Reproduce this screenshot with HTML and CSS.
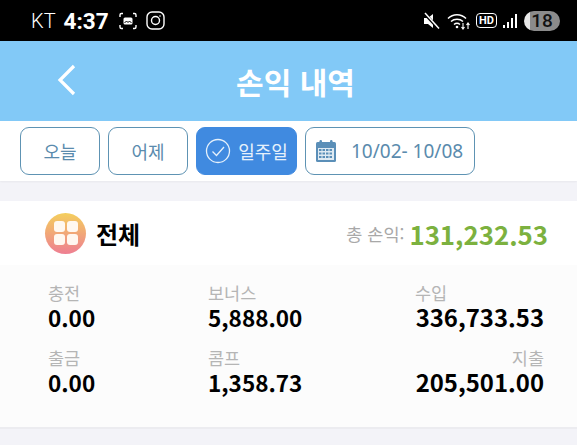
FILE: index.html
```html
<!DOCTYPE html>
<html lang="ko">
<head>
<meta charset="utf-8">
<title>손익 내역</title>
<link rel="stylesheet" href="styles.css">
</head>
<body>
<div class="status">
  <div class="status-left">
    <span class="carrier">KT</span>
    <span class="clock">4:37</span>
    <svg class="st-ic" width="20" height="20" viewBox="0 0 20 20" fill="none" stroke="#fff" stroke-width="1.4"><path d="M5 2.5H3.5a1.5 1.5 0 0 0-1.5 1.5V6M15 2.5h1.5A1.5 1.5 0 0 1 18 4v2M5 17.500H3.500A1.500 1.500 0 0 1 2 16v-2M15 17.500h1.500A1.500 1.500 0 0 0 18 16v-2"/><rect x="5.500" y="6.500" width="9" height="7" rx="1.500" fill="#fff" stroke="none"/><path d="M6.500 12l2-2 1.500 1.500 1.500-1.500 2 2" stroke="#000" stroke-width="1"/></svg>
    <svg class="st-ic" width="19" height="19" viewBox="0 0 19 19" fill="none" stroke="#fff" stroke-width="1.400"><rect x="1" y="1" width="17" height="17" rx="5"/><circle cx="9.500" cy="9.500" r="4"/><circle cx="14" cy="5" r=".8" fill="#fff" stroke="none"/></svg>
  </div>
  <div class="status-right">
    <svg width="20" height="20" viewBox="0 0 20 20"><path d="M2 7h4l5-4v14l-5-4H2z" fill="#fff"/><path d="M2 2l15 16" stroke="#000" stroke-width="3"/><path d="M3 2l14 15.500" stroke="#fff" stroke-width="1.500"/></svg>
    <svg class="wifi" width="25" height="20" viewBox="0 0 25 20" fill="none" stroke="#fff" stroke-width="1.500"><path d="M1 7.500c5-5 13-5 18 0M4 10.500c3.200-3 8.800-3 12 0M7 13.500c1.800-1.500 4.200-1.500 6 0"/><circle cx="10" cy="16" r="1.300" fill="#fff" stroke="none"/><path d="M16 12v6M14.500 16l1.500 2 1.500-2M21 18v-6M19.500 14l1.500-2 1.500 2" stroke-width="1.100"/></svg>
    <span class="hd">HD</span>
    <svg class="signal" width="16" height="16" viewBox="0 0 16 16" fill="#fff"><rect x="1" y="12" width="2" height="3"/><rect x="5" y="9" width="2" height="6"/><rect x="9" y="5" width="2" height="10"/><rect x="13" y="1" width="2" height="14"/></svg>
    <span class="battery">18</span>
  </div>
</div>

<header class="topbar">
  <svg class="back" width="24" height="36" viewBox="0 0 24 36" fill="none" stroke="#fff" stroke-width="3.200"><path d="M19 4L5 18l14 14"/></svg>
  <h1 class="title">손익 내역</h1>
</header>

<nav class="tabs">
  <button class="tab tab-day">오늘</button>
  <button class="tab tab-day">어제</button>
  <button class="tab tab-active">
    <svg width="26" height="26" viewBox="0 0 26 26" fill="none" stroke="#e6f1fb" stroke-width="1.300"><circle cx="13" cy="13" r="11.500"/><path d="M7.500 13.500l4 4 7.500-8.500"/></svg>
    일주일
  </button>
  <button class="tab tab-date">
    <svg width="22" height="24" viewBox="0 0 22 24"><rect x="1" y="3" width="20" height="20" rx="1.500" fill="#5b8fb8"/><rect x="3" y="9" width="16" height="12" fill="#dfeaf2"/><g fill="#5b8fb8"><rect x="4" y="10" width="2.500" height="2"/><rect x="7.500" y="10" width="2.500" height="2"/><rect x="11" y="10" width="2.500" height="2"/><rect x="14.500" y="10" width="2.500" height="2"/><rect x="4" y="13.500" width="2.500" height="2"/><rect x="7.500" y="13.500" width="2.500" height="2"/><rect x="11" y="13.500" width="2.500" height="2"/><rect x="14.500" y="13.500" width="2.500" height="2"/><rect x="4" y="17" width="2.500" height="2"/><rect x="7.500" y="17" width="2.500" height="2"/><rect x="11" y="17" width="2.500" height="2"/><rect x="14.500" y="17" width="2.500" height="2"/></g><rect x="4.500" y="1" width="2.500" height="5" rx="1.200" fill="#5b8fb8"/><rect x="15" y="1" width="2.500" height="5" rx="1.200" fill="#5b8fb8"/></svg>
    <span>10/02- 10/08</span>
  </button>
</nav>

<section class="card">
  <div class="card-head">
    <div class="head-left">
      <span class="logo"><i></i><i></i><i></i><i></i></span>
      <strong class="all">전체</strong>
    </div>
    <div class="total">
      <span class="total-label">총 손익:</span>
      <span class="total-value">131,232.53</span>
    </div>
  </div>
  <div class="stats">
    <div class="stat"><span class="lbl">충전</span><span class="val">0.00</span></div>
    <div class="stat"><span class="lbl">보너스</span><span class="val">5,888.00</span></div>
    <div class="stat right"><span class="lbl lbl-left">수입</span><span class="val val-big">336,733.53</span></div>
    <div class="stat"><span class="lbl">출금</span><span class="val">0.00</span></div>
    <div class="stat"><span class="lbl">콤프</span><span class="val">1,358.73</span></div>
    <div class="stat right"><span class="lbl">지출</span><span class="val val-big">205,501.00</span></div>
  </div>
</section>
</body>
</html>
```
FILE: styles.css
```css
* { box-sizing: border-box; }
html, body { margin: 0; padding: 0; }
body {
  width: 577px;
  height: 445px;
  overflow: hidden;
  background: #f3f3f8;
  font-family: "Noto Sans CJK KR", "Noto Sans", sans-serif;
}
.status {
  height: 41px;
  background: #000;
  color: #fff;
  display: flex;
  justify-content: space-between;
  align-items: center;
  padding: 0 17px 0 31px;
  font-family: Roboto, "Noto Sans", sans-serif;
}
.status-left { display: flex; align-items: center; }
.carrier { font-size: 20px; font-weight: 300; margin-right: 8px; }
.clock { font-size: 22.500px; font-weight: 700; margin-right: 9px; }
.st-ic { margin-right: 8px; }
.status-right { display: flex; align-items: center; gap: 3px; }
.wifi { margin-left: 2px; }
.hd {
  border: 1.500px solid #fff;
  border-radius: 4px;
  font-size: 11px;
  font-weight: 700;
  line-height: 13px;
  padding: 0 2px;
  margin: 0 0 0 1px;
}
.signal { margin-left: 2px; }
.battery {
  width: 36px;
  height: 20px;
  margin-left: 3px;
  border-radius: 10px;
  background: linear-gradient(90deg, #e8e8e8 0 6px, #8b8b8b 6px);
  color: #111;
  font-size: 19px;
  font-weight: 500;
  line-height: 20px;
  text-align: center;
}
.topbar {
  height: 80px;
  background: #82c9f7;
  position: relative;
  display: flex;
  align-items: center;
  justify-content: center;
}
.back { position: absolute; left: 55px; top: 21px; }
.title {
  margin: 0 0 0 14px;
  color: #fff;
  font-size: 30px;
  font-weight: 700;
  line-height: 1;
}
.tabs {
  height: 60px;
  background: #fff;
  display: flex;
  align-items: flex-start;
  gap: 8px;
  padding: 6px 0 0 20px;
  box-shadow: 0 1px 2px rgba(0,0,0,.05);
}
.tab {
  height: 48px;
  border-radius: 9px;
  border: 1px solid #5e93b3;
  background: #fff;
  color: #5a8bad;
  font-family: "Noto Sans CJK KR", sans-serif;
  font-size: 18px;
  padding: 0;
  display: flex;
  align-items: center;
  justify-content: center;
}
.tab-day { width: 80px; }
.tab-active {
  width: 101px;
  background: #408ae0;
  border-color: #408ae0;
  color: #e6f1fb;
  gap: 7px;
}
.tab-date {
  width: 170px;
  gap: 14px;
  justify-content: flex-start;
  padding-left: 9px;
  font-size: 19px;
  font-family: "Noto Sans", sans-serif;
}
.card { margin-top: 20px; background: #fcfcfc; height: 228px; border-bottom: 2px solid #ececf0; }
.card-head {
  height: 64px;
  background: #fff;
  display: flex;
  justify-content: space-between;
  align-items: center;
  padding: 0 29px 0 45px;
}
.head-left { display: flex; align-items: center; gap: 10px; }
.logo {
  width: 41px;
  height: 41px;
  border-radius: 50%;
  background: linear-gradient(180deg, #f4cf5d, #ee7f92);
  display: grid;
  grid-template-columns: 11px 11px;
  grid-auto-rows: 11px;
  gap: 2px;
  place-content: center;
}
.logo i { background: #fff8f0; border-radius: 3px; }
.all { font-size: 24px; font-weight: 700; color: #000; }
.total { display: flex; align-items: center; gap: 5px; }
.total-label { font-size: 17.500px; color: #a8a8a8; }
.total-value { font-size: 25.800px; font-weight: 700; color: #7cb13f; }
.stats {
  display: grid;
  grid-template-columns: 160px 207px 129px;
  grid-auto-rows: 65px;
  padding: 17px 0 0 48px;
}
.stat { display: flex; flex-direction: column; align-items: flex-start; }
.stat.right { align-items: flex-end; }
.lbl { font-size: 17.500px; color: #b5b5b5; line-height: 22px; }
.lbl-left { align-self: flex-start; }
.val { font-size: 22.500px; font-weight: 700; color: #000; line-height: 26px; }
.val-big { font-size: 23.900px; }
```
